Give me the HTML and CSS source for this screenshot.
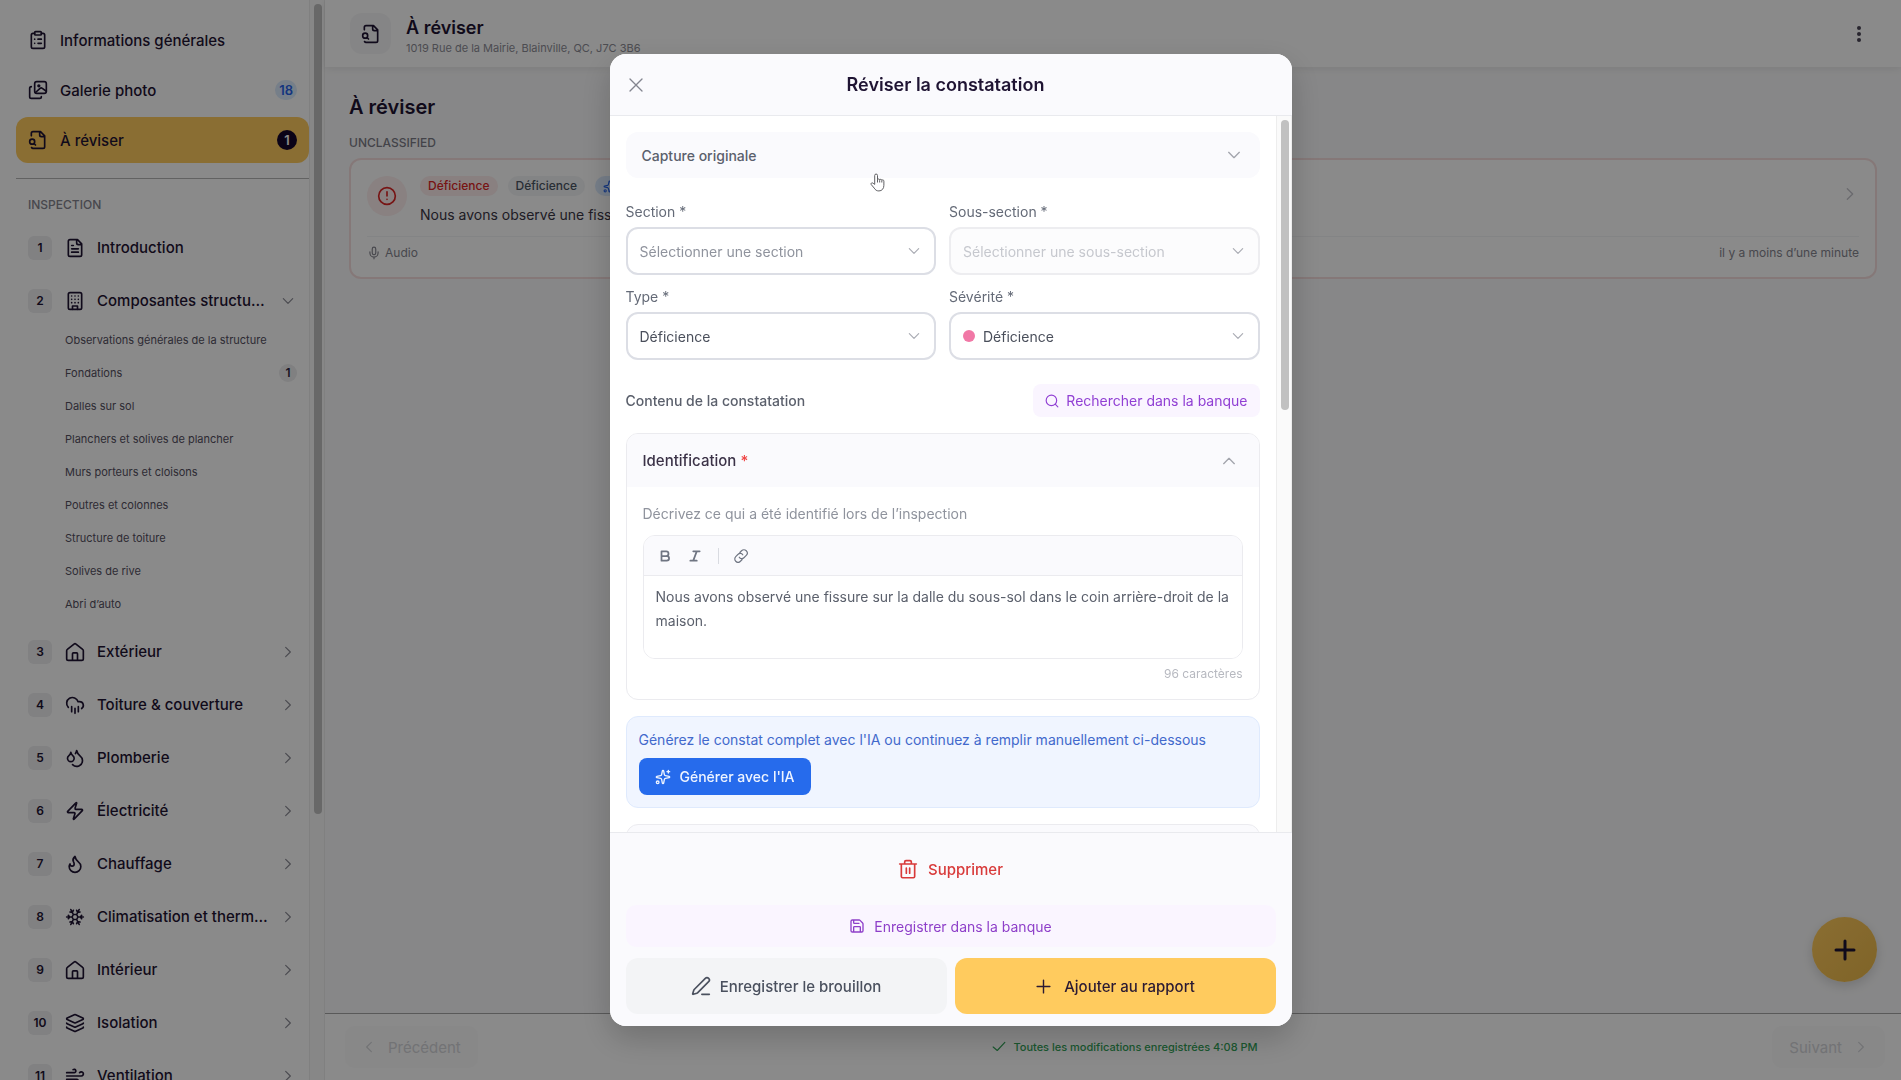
FILE: index.html
```html
<!DOCTYPE html>
<html lang="fr">
<head>
	<meta charset="utf-8">
	<meta name="viewport" content="width=device-width, initial-scale=1">
	<title>À réviser</title>
	<link rel="stylesheet" href="styles.css">
</head>
<body>
	<!-- icon sprite -->
	<svg class="sprite" aria-hidden="true">
		<symbol id="i-clipboard" viewBox="0 0 24 24"><rect width="8" height="4" x="8" y="2" rx="1"/><path d="M16 4h2a2 2 0 0 1 2 2v14a2 2 0 0 1-2 2H6a2 2 0 0 1-2-2V6a2 2 0 0 1 2-2h2M12 11h4M12 16h4M8 11h.01M8 16h.01"/></symbol>
		<symbol id="i-images" viewBox="0 0 24 24"><rect width="14" height="14" x="8" y="2" rx="2.5"/><path d="M4 8a2 2 0 0 0-2 2v10a2 2 0 0 0 2 2h10a2 2 0 0 0 2-2M9 15l5.500-5a2 2 0 0 1 2.700 0L22 13.500"/><circle cx="13" cy="7" r="1"/></symbol>
		<symbol id="i-review" viewBox="0 0 24 24"><path d="M14 2v4a2 2 0 0 0 2 2h4M4.268 21a2 2 0 0 0 1.727 1H18a2 2 0 0 0 2-2V7l-5-5H6a2 2 0 0 0-2 2v3M9 18l-1.500-1.500"/><circle cx="5" cy="14" r="3"/></symbol>
		<symbol id="i-file" viewBox="0 0 24 24"><path d="M15 2H6a2 2 0 0 0-2 2v16a2 2 0 0 0 2 2h12a2 2 0 0 0 2-2V7ZM14 2v4a2 2 0 0 0 2 2h4M10 9H8M16 13H8M16 17H8"/></symbol>
		<symbol id="i-building" viewBox="0 0 24 24"><rect width="16" height="20" x="4" y="2" rx="2"/><path d="M9 22v-4h6v4M8 6h.01M16 6h.01M12 6h.01M12 10h.01M12 14h.01M16 10h.01M16 14h.01M8 10h.01M8 14h.01"/></symbol>
		<symbol id="i-home" viewBox="0 0 24 24"><path d="M15 22v-8a1 1 0 0 0-1-1h-4a1 1 0 0 0-1 1v8M2 10.500a2 2 0 0 1 .8-1.600l8-6.400a2 2 0 0 1 2.400 0l8 6.400a2 2 0 0 1 .8 1.600V20a2 2 0 0 1-2 2H4a2 2 0 0 1-2-2z"/></symbol>
		<symbol id="i-rain" viewBox="0 0 24 24"><path d="M4 14.899A7 7 0 1 1 15.710 8h1.790a4.500 4.500 0 0 1 2.500 8.242M16 14v6M8 14v6M12 16v6"/></symbol>
		<symbol id="i-drops" viewBox="0 0 24 24"><path d="M7 16.300c2.200 0 4-1.830 4-4.050 0-1.160-.57-2.260-1.710-3.190S7.290 6.750 7 5.300c-.29 1.450-1.140 2.840-2.290 3.760S3 11.100 3 12.250c0 2.220 1.800 4.050 4 4.050zM12.560 6.600A10.970 10.970 0 0 0 14 3.020c.5 2.500 2 4.900 4 6.500s3 3.500 3 5.500a6.980 6.980 0 0 1-11.910 4.970"/></symbol>
		<symbol id="i-zap" viewBox="0 0 24 24"><path d="M4 14a1 1 0 0 1-.78-1.630l9.900-10.200a.5.5 0 0 1 .86.46l-1.920 6.020A1 1 0 0 0 13 10h7a1 1 0 0 1 .78 1.630l-9.900 10.200a.5.5 0 0 1-.86-.46l1.920-6.020A1 1 0 0 0 11 14z"/></symbol>
		<symbol id="i-flame" viewBox="0 0 24 24"><path d="M8.500 14.500A2.500 2.500 0 0 0 11 12c0-1.380-.5-2-1-3-1.072-2.143-.224-4.054 2-6 .5 2.500 2 4.900 4 6.500 2 1.600 3 3.500 3 5.500a7 7 0 1 1-14 0c0-1.153.433-2.294 1-3a2.500 2.500 0 0 0 2.500 2.500z"/></symbol>
		<symbol id="i-snow" viewBox="0 0 24 24"><path d="m10 20-1.250-2.500L6 18M10 4 8.750 6.500 6 6M14 20l1.250-2.500L18 18M14 4l1.250 2.500L18 6M17 21l-3-6h-4M17 3l-3 6 1.500 3M2 12h6.500L10 9M20 10l-1.500 2 1.500 2M22 12h-6.500L14 15M4 10l1.500 2L4 14M7 21l3-6-1.500-3M7 3l3 6h4"/></symbol>
		<symbol id="i-layers" viewBox="0 0 24 24"><path d="M12.830 2.180a2 2 0 0 0-1.660 0L2.600 6.080a1 1 0 0 0 0 1.830l8.580 3.910a2 2 0 0 0 1.660 0l8.580-3.900a1 1 0 0 0 0-1.830zM2 12a1 1 0 0 0 .58.91l8.600 3.910a2 2 0 0 0 1.650 0l8.580-3.900A1 1 0 0 0 22 12M2 17a1 1 0 0 0 .58.91l8.600 3.910a2 2 0 0 0 1.650 0l8.580-3.900A1 1 0 0 0 22 17"/></symbol>
		<symbol id="i-wind" viewBox="0 0 24 24"><path d="M12.800 19.600A2 2 0 1 0 14 16H2M17.500 8a2.500 2.500 0 1 1 2 4H2M9.800 4.400A2 2 0 1 1 11 8H2"/></symbol>
		<symbol id="i-down" viewBox="0 0 24 24"><path d="m4 8 8 8 8-8"/></symbol>
		<symbol id="i-up" viewBox="0 0 24 24"><path d="m4 16 8-8 8 8"/></symbol>
		<symbol id="i-right" viewBox="0 0 24 24"><path d="m8 4 8 8-8 8"/></symbol>
		<symbol id="i-left" viewBox="0 0 24 24"><path d="m16 4-8 8 8 8"/></symbol>
		<symbol id="i-close" viewBox="0 0 24 24"><path d="M3 3l18 18M21 3 3 21"/></symbol>
		<symbol id="i-plus" viewBox="0 0 24 24"><path d="M12 3v18M3 12h18"/></symbol>
		<symbol id="i-check" viewBox="0 0 24 24"><path d="M22 4 9 18l-7-6"/></symbol>
		<symbol id="i-alert" viewBox="0 0 24 24"><circle cx="12" cy="12" r="10"/><path d="M12 7v5M12 16h.01"/></symbol>
		<symbol id="i-mic" viewBox="0 0 24 24"><rect x="9" y="2" width="6" height="13" rx="3"/><path d="M12 19v3M19 10v2a7 7 0 0 1-14 0v-2"/></symbol>
		<symbol id="i-search" viewBox="0 0 24 24"><circle cx="11" cy="11" r="9"/><path d="m22 22-4.500-4.500"/></symbol>
		<symbol id="i-bold" viewBox="0 0 24 24"><path d="M6 12h9a4 4 0 0 1 0 8H6V4h8a4 4 0 0 1 0 8"/></symbol>
		<symbol id="i-italic" viewBox="0 0 24 24"><path d="M20 4H9M15 20H4M15 4 9 20"/></symbol>
		<symbol id="i-link" viewBox="0 0 24 24"><path d="M9 14a5 5 0 0 0 8 1l4-4a5 5 0 0 0-8-8l-3 3M15 10a5 5 0 0 0-8-1l-4 4a5 5 0 0 0 8 8l3-3"/></symbol>
		<symbol id="i-sparkles" viewBox="0 0 24 24"><path d="M11.017 2.814a1 1 0 0 1 1.966 0l1.051 5.558a2 2 0 0 0 1.594 1.594l5.558 1.051a1 1 0 0 1 0 1.966l-5.558 1.051a2 2 0 0 0-1.594 1.594l-1.051 5.558a1 1 0 0 1-1.966 0l-1.051-5.558a2 2 0 0 0-1.594-1.594l-5.558-1.051a1 1 0 0 1 0-1.966l5.558-1.051a2 2 0 0 0 1.594-1.594zM20 2v4M22 4h-4"/><circle cx="4" cy="20" r="2"/></symbol>
		<symbol id="i-save" viewBox="0 0 24 24"><path d="M15.200 3a2 2 0 0 1 1.400.6l3.800 3.800a2 2 0 0 1 .6 1.400V19a2 2 0 0 1-2 2H5a2 2 0 0 1-2-2V5a2 2 0 0 1 2-2zM17 21v-7a1 1 0 0 0-1-1H8a1 1 0 0 0-1 1v7M7 3v4a1 1 0 0 0 1 1h7"/></symbol>
		<symbol id="i-trash" viewBox="0 0 24 24"><path d="M2 6h20M4 6v15a1.500 1.500 0 0 0 1.500 1.500h13A1.500 1.500 0 0 0 20 21V6M8 6V3.500A1.500 1.500 0 0 1 9.500 2h5A1.500 1.500 0 0 1 16 3.500V6M10 11v6M14 11v6"/></symbol>
		<symbol id="i-pen" viewBox="0 0 24 24"><path d="M13 22h9M21.174 6.812a1 1 0 0 0-3.986-3.987L3.842 16.174a2 2 0 0 0-.5.83l-1.321 4.352a.5.5 0 0 0 .623.622l4.353-1.320a2 2 0 0 0 .83-.497z"/></symbol>
	</svg>

	<div class="app">
		<aside class="sidebar">
			<nav class="sidebar-nav">
				<a class="nav-link" href="#"><svg class="icon"><use href="#i-clipboard"/></svg><span class="nav-label">Informations générales</span></a>
				<a class="nav-link" href="#"><svg class="icon"><use href="#i-images"/></svg><span class="nav-label">Galerie photo</span><span class="count count-blue">18</span></a>
				<a class="nav-link active" href="#"><svg class="icon"><use href="#i-review"/></svg><span class="nav-label">À réviser</span><span class="count count-dark">1</span></a>
				<hr class="divider">
				<h2 class="nav-heading">INSPECTION</h2>
				<a class="section-link" href="#"><span class="num">1</span><svg class="icon"><use href="#i-file"/></svg><span class="nav-label">Introduction</span></a>
				<a class="section-link" href="#"><span class="num">2</span><svg class="icon"><use href="#i-building"/></svg><span class="nav-label">Composantes structu…</span><svg class="icon chevron"><use href="#i-down"/></svg></a>
				<div class="sub-list">
					<a class="sub-link" href="#">Observations générales de la structure</a>
					<a class="sub-link" href="#">Fondations<span class="count count-small">1</span></a>
					<a class="sub-link" href="#">Dalles sur sol</a>
					<a class="sub-link" href="#">Planchers et solives de plancher</a>
					<a class="sub-link" href="#">Murs porteurs et cloisons</a>
					<a class="sub-link" href="#">Poutres et colonnes</a>
					<a class="sub-link" href="#">Structure de toiture</a>
					<a class="sub-link" href="#">Solives de rive</a>
					<a class="sub-link" href="#">Abri d’auto</a>
				</div>
				<a class="section-link" href="#"><span class="num">3</span><svg class="icon"><use href="#i-home"/></svg><span class="nav-label">Extérieur</span><svg class="icon chevron"><use href="#i-right"/></svg></a>
				<a class="section-link" href="#"><span class="num">4</span><svg class="icon"><use href="#i-rain"/></svg><span class="nav-label">Toiture &amp; couverture</span><svg class="icon chevron"><use href="#i-right"/></svg></a>
				<a class="section-link" href="#"><span class="num">5</span><svg class="icon"><use href="#i-drops"/></svg><span class="nav-label">Plomberie</span><svg class="icon chevron"><use href="#i-right"/></svg></a>
				<a class="section-link" href="#"><span class="num">6</span><svg class="icon"><use href="#i-zap"/></svg><span class="nav-label">Électricité</span><svg class="icon chevron"><use href="#i-right"/></svg></a>
				<a class="section-link" href="#"><span class="num">7</span><svg class="icon"><use href="#i-flame"/></svg><span class="nav-label">Chauffage</span><svg class="icon chevron"><use href="#i-right"/></svg></a>
				<a class="section-link" href="#"><span class="num">8</span><svg class="icon"><use href="#i-snow"/></svg><span class="nav-label">Climatisation et therm…</span><svg class="icon chevron"><use href="#i-right"/></svg></a>
				<a class="section-link" href="#"><span class="num">9</span><svg class="icon"><use href="#i-home"/></svg><span class="nav-label">Intérieur</span><svg class="icon chevron"><use href="#i-right"/></svg></a>
				<a class="section-link" href="#"><span class="num">10</span><svg class="icon"><use href="#i-layers"/></svg><span class="nav-label">Isolation</span><svg class="icon chevron"><use href="#i-right"/></svg></a>
				<a class="section-link" href="#"><span class="num">11</span><svg class="icon"><use href="#i-wind"/></svg><span class="nav-label">Ventilation</span><svg class="icon chevron"><use href="#i-right"/></svg></a>
			</nav>
			<div class="scrollbar"><div class="thumb thumb-nav"></div></div>
		</aside>

		<main class="main">
			<header class="topbar">
				<div class="topbar-icon"><svg class="icon"><use href="#i-review"/></svg></div>
				<div class="topbar-text">
					<div class="topbar-title">À réviser</div>
					<div class="topbar-address">1019 Rue de la Mairie, Blainville, QC, J7C 3B6</div>
				</div>
				<button class="kebab" type="button" aria-label="Menu"><i></i><i></i><i></i></button>
			</header>

			<section class="content">
				<h1 class="page-title">À réviser</h1>
				<h2 class="group-title">UNCLASSIFIED</h2>
				<article class="card">
					<div class="card-top">
						<div class="card-alert"><svg class="icon"><use href="#i-alert"/></svg></div>
						<div class="card-info">
							<div class="chips">
								<span class="chip chip-red">Déficience</span>
								<span class="chip chip-gray">Déficience</span>
								<span class="chip chip-blue"><svg class="icon"><use href="#i-sparkles"/></svg></span>
							</div>
							<p class="card-text">Nous avons observé une fissure</p>
						</div>
						<svg class="icon card-arrow"><use href="#i-right"/></svg>
					</div>
					<div class="card-bottom">
						<span class="audio"><svg class="icon"><use href="#i-mic"/></svg>Audio</span>
						<span class="ago">il y a moins d’une minute</span>
					</div>
				</article>
			</section>

			<footer class="pager">
				<button class="pager-btn" type="button" disabled><svg class="icon"><use href="#i-left"/></svg>Précédent</button>
				<span class="saved"><svg class="icon"><use href="#i-check"/></svg>Toutes les modifications enregistrées 4:08 PM</span>
				<button class="pager-btn" type="button" disabled>Suivant<svg class="icon"><use href="#i-right"/></svg></button>
			</footer>
			<button class="fab" type="button" aria-label="Ajouter"><svg class="icon"><use href="#i-plus"/></svg></button>
		</main>
	</div>

	<div class="overlay">
		<div class="modal" role="dialog" aria-modal="true" aria-labelledby="modal-title">
			<header class="modal-head">
				<button class="close" type="button" aria-label="Fermer"><svg class="icon"><use href="#i-close"/></svg></button>
				<h2 class="modal-title" id="modal-title">Réviser la constatation</h2>
			</header>

			<div class="modal-scroll">
				<form class="modal-body" id="finding">
					<button class="capture" type="button">Capture originale<svg class="icon"><use href="#i-down"/></svg></button>

					<div class="fields">
						<div class="field">
							<label for="section">Section *</label>
							<div class="select">
								<select id="section" class="placeholder"><option>Sélectionner une section</option></select>
								<svg class="icon"><use href="#i-down"/></svg>
							</div>
						</div>
						<div class="field">
							<label for="subsection">Sous-section *</label>
							<div class="select disabled">
								<select id="subsection" class="placeholder" disabled><option>Sélectionner une sous-section</option></select>
								<svg class="icon"><use href="#i-down"/></svg>
							</div>
						</div>
						<div class="field">
							<label for="type">Type *</label>
							<div class="select">
								<select id="type"><option>Déficience</option></select>
								<svg class="icon"><use href="#i-down"/></svg>
							</div>
						</div>
						<div class="field">
							<label for="severity">Sévérité *</label>
							<div class="select with-dot">
								<span class="dot"></span>
								<select id="severity"><option>Déficience</option></select>
								<svg class="icon"><use href="#i-down"/></svg>
							</div>
						</div>
					</div>

					<div class="content-row">
						<h3 class="content-title">Contenu de la constatation</h3>
						<button class="bank-search" type="button"><svg class="icon"><use href="#i-search"/></svg>Rechercher dans la banque</button>
					</div>

					<section class="panel">
						<button class="panel-head" type="button"><span>Identification <b class="req">*</b></span><svg class="icon"><use href="#i-up"/></svg></button>
						<div class="panel-body">
							<label class="hint" for="identification">Décrivez ce qui a été identifié lors de l’inspection</label>
							<div class="editor">
								<div class="toolbar">
									<button type="button" aria-label="Gras"><svg class="icon"><use href="#i-bold"/></svg></button>
									<button type="button" aria-label="Italique"><svg class="icon"><use href="#i-italic"/></svg></button>
									<span class="sep"></span>
									<button type="button" aria-label="Lien"><svg class="icon icon-link"><use href="#i-link"/></svg></button>
								</div>
								<textarea id="identification">Nous avons observé une fissure sur la dalle du sous-sol dans le coin arrière-droit de la maison.</textarea>
							</div>
							<div class="chars">96 caractères</div>
						</div>
					</section>

					<section class="ai-box">
						<p>Générez le constat complet avec l'IA ou continuez à remplir manuellement ci-dessous</p>
						<button class="ai-btn" type="button"><svg class="icon"><use href="#i-sparkles"/></svg>Générer avec l'IA</button>
					</section>

					<section class="panel panel-next"></section>
				</form>
				<div class="scrollbar"><div class="thumb thumb-modal"></div></div>
			</div>

			<footer class="modal-foot">
				<button class="delete" type="button"><svg class="icon"><use href="#i-trash"/></svg>Supprimer</button>
				<button class="bank-save" type="button"><svg class="icon"><use href="#i-save"/></svg>Enregistrer dans la banque</button>
				<div class="foot-row">
					<button class="btn btn-draft" type="button"><svg class="icon"><use href="#i-pen"/></svg>Enregistrer le brouillon</button>
					<button class="btn btn-add" type="submit" form="finding"><svg class="icon icon-plus"><use href="#i-plus"/></svg>Ajouter au rapport</button>
				</div>
			</footer>

			<svg class="pointer" viewBox="0 0 16 20"><path d="M5 12V2.500a1.500 1.500 0 0 1 3 0V7a1.200 1.200 0 0 1 2.300.3 1.200 1.200 0 0 1 2.300.5 1.200 1.200 0 0 1 2.200.8V13c0 3.500-2 6-5.300 6-2.500 0-3.700-1-5-3L1.300 12.200C.5 10.700 2.200 9.700 3.300 10.800z"/><path d="M8 7v3M10.300 7.500V10M12.600 8v2"/></svg>
		</div>
	</div>
</body>
</html>
```

FILE: styles.css
```css
* {
	box-sizing: border-box;
}

body {
	margin: 0;
	font-family: "Inter", "Open Sans", sans-serif;
	font-size: 14px;
	color: #1f1433;
	background: #fafafb;
	overflow: hidden;
}

button, select, textarea {
	font: inherit;
	color: inherit;
	margin: 0;
}

button {
	display: flex;
	align-items: center;
	border: 0;
	background: none;
	padding: 0;
	cursor: pointer;
}

a {
	color: inherit;
	text-decoration: none;
}

h1, h2, h3, p {
	margin: 0;
}

.sprite {
	display: none;
}

.icon {
	width: 20px;
	height: 20px;
	flex: none;
	fill: none;
	stroke: currentColor;
	stroke-width: 2;
	stroke-linecap: round;
	stroke-linejoin: round;
}

.app {
	display: flex;
	height: 100vh;
}

/* sidebar */
.sidebar {
	display: flex;
	width: 325px;
	flex: none;
	background: #fff;
	overflow: hidden;
}

.sidebar-nav {
	flex: 1;
	padding: 17px 0 0 16px;
}

.scrollbar {
	width: 16px;
	flex: none;
	padding: 4px;
	background: #fafafa;
	border-left: 1px solid #ededed;
	border-right: 1px solid #ededed;
}

.thumb {
	width: 8px;
	border-radius: 4px;
	background: #c1c1c1;
}

.thumb-nav {
	height: 75vh;
}

.thumb-modal {
	height: 41%;
}

.nav-link {
	display: flex;
	align-items: center;
	gap: 12px;
	height: 46px;
	margin-bottom: 4px;
	padding: 0 12px;
	border-radius: 12px;
	font-size: 15px;
	font-weight: 500;
}

.nav-link.active {
	background: #ffcb5e;
}

.nav-label {
	flex: 1;
	white-space: nowrap;
}

.count {
	height: 20px;
	min-width: 20px;
	border-radius: 10px;
	font-size: 13px;
	font-weight: 600;
	line-height: 20px;
	text-align: center;
}

.count-blue {
	padding: 0 4px;
	background: #dbeafe;
	color: #2563eb;
}

.count-dark {
	background: #16062b;
	color: #fff;
}

.count-small {
	height: 18px;
	min-width: 18px;
	font-size: 12px;
	line-height: 18px;
	background: #ececee;
	color: #2f2640;
}

.divider {
	margin: 15px 0 0;
	border: 0;
	border-top: 1px solid #b5b5b5;
}

.nav-heading {
	margin: 18px 0 8px;
	padding-left: 12px;
	font-size: 12px;
	line-height: 16px;
	font-weight: 500;
	color: #85858f;
}

.section-link {
	display: flex;
	align-items: center;
	height: 53px;
	padding: 0 14px 0 12px;
	font-size: 15px;
	font-weight: 500;
}

.section-link .num {
	width: 24px;
	height: 24px;
	margin-right: 13px;
	border-radius: 6px;
	background: #eeeef0;
	font-size: 12px;
	font-weight: 600;
	line-height: 24px;
	text-align: center;
}

.section-link .nav-label {
	padding-left: 12px;
}

.chevron {
	width: 14px;
	height: 14px;
	color: #8a8a94;
}

.sub-list {
	margin-top: -4px;
	padding: 0 12px 5px 49px;
}

.sub-link {
	display: flex;
	align-items: center;
	justify-content: space-between;
	height: 33px;
	font-size: 11px;
	color: #55505f;
}

/* main column */
.main {
	display: flex;
	flex-direction: column;
	flex: 1;
	min-width: 0;
}

.topbar {
	display: flex;
	align-items: center;
	gap: 15px;
	height: 67px;
	padding: 0 32px 0 25px;
	background: #fff;
	box-shadow: 0 2px 8px rgba(0, 0, 0, 0.08);
}

.topbar-icon {
	display: flex;
	align-items: center;
	justify-content: center;
	width: 41px;
	height: 41px;
	border-radius: 12px;
	background: #f6f6f7;
}

.topbar-text {
	flex: 1;
	padding-top: 3px;
}

.topbar-title {
	font-size: 18px;
	font-weight: 600;
	line-height: 25px;
}

.topbar-address {
	font-size: 11px;
	line-height: 16px;
	color: #8d8d96;
}

.kebab {
	flex-direction: column;
	gap: 2px;
	padding: 4px 8px;
}

.kebab i {
	width: 4px;
	height: 4px;
	border-radius: 50%;
	background: #4a4556;
}

.content {
	flex: 1;
	padding: 25px 24px;
}

.page-title {
	font-size: 20px;
	font-weight: 600;
	line-height: 30px;
}

.group-title {
	margin: 13px 0 7px;
	font-size: 12px;
	font-weight: 500;
	line-height: 16px;
	color: #7d7d88;
}

.card {
	padding: 16px;
	border: 2px solid #f6dede;
	border-radius: 12px;
	background: #fff;
}

.card-top {
	display: flex;
	gap: 13px;
	padding-bottom: 10px;
	border-bottom: 1px solid #f3f4f6;
}

.card-alert {
	display: flex;
	align-items: center;
	justify-content: center;
	width: 40px;
	height: 40px;
	border-radius: 50%;
	background: #fdeeee;
	color: #dc2626;
}

.card-info {
	flex: 1;
}

.chips {
	display: flex;
	gap: 10px;
}

.chip {
	height: 20px;
	padding: 0 8px;
	border-radius: 10px;
	font-size: 12px;
	font-weight: 500;
	line-height: 20px;
}

.chip-red {
	background: #fdecec;
	color: #dc2626;
}

.chip-gray {
	background: #f3f4f6;
	color: #4b5563;
}

.chip-blue {
	display: flex;
	align-items: center;
	background: #dbeafe;
	color: #2563eb;
}

.chip-blue .icon {
	width: 13px;
	height: 13px;
}

.card-text {
	margin-top: 8px;
	font-size: 14px;
	line-height: 22px;
	color: #3a3645;
}

.card-arrow {
	width: 16px;
	height: 16px;
	margin: 10px 1px 0 0;
	color: #c4c4cc;
}

.card-bottom {
	display: flex;
	justify-content: space-between;
	padding-top: 8px;
	font-size: 12px;
	line-height: 16px;
	color: #85858f;
}

.audio {
	display: flex;
	align-items: center;
	gap: 4px;
}

.audio .icon {
	width: 14px;
	height: 14px;
}

.pager {
	display: flex;
	align-items: center;
	justify-content: space-between;
	height: 67px;
	padding: 0 16px 0 20px;
	border-top: 1px solid #a5a5a5;
	background: #fff;
}

.pager-btn {
	gap: 12px;
	height: 42px;
	padding: 0 17px;
	border-radius: 10px;
	background: #fbfbfc;
	font-size: 15px;
	color: #d3d4d8;
}

.pager-btn .icon {
	width: 14px;
	height: 14px;
}

.saved {
	display: flex;
	align-items: center;
	gap: 7px;
	font-size: 11px;
	font-weight: 500;
	color: #32a257;
}

.saved .icon {
	width: 14px;
	height: 14px;
}

.fab {
	position: fixed;
	right: 24px;
	bottom: 98px;
	justify-content: center;
	width: 65px;
	height: 65px;
	border-radius: 50%;
	background: linear-gradient(135deg, #ffcb5e, #ebb84a);
	box-shadow: 0 4px 12px rgba(0, 0, 0, 0.15);
}

.fab .icon {
	width: 24px;
	height: 24px;
	stroke-width: 3;
}

/* modal */
.overlay {
	position: fixed;
	inset: 0;
	display: flex;
	align-items: center;
	justify-content: center;
	background: rgba(0, 0, 0, 0.46);
}

.modal {
	position: relative;
	display: flex;
	flex-direction: column;
	width: 100%;
	max-width: 682px;
	height: 90vh;
	border-radius: 16px;
	background: #fff;
	box-shadow: 0 12px 32px rgba(0, 0, 0, 0.2);
	overflow: hidden;
}

.modal-head {
	display: flex;
	align-items: center;
	height: 62px;
	padding: 0 44px 0 18px;
	border-bottom: 1px solid #e9eaee;
	background: #fafafd;
}

.close {
	color: #83858f;
}

.close .icon {
	width: 16px;
	height: 16px;
}

.modal-title {
	flex: 1;
	font-size: 18px;
	font-weight: 600;
	text-align: center;
}

.modal-scroll {
	display: flex;
	flex: 1;
	min-height: 0;
}

.modal-body {
	display: flex;
	flex-direction: column;
	flex: 1;
	min-width: 0;
	padding: 16px 16px 0;
	overflow: hidden;
}

.modal-body > * {
	flex: none;
}

.capture {
	justify-content: space-between;
	height: 46px;
	padding: 0 18px 0 16px;
	border-radius: 12px;
	background: #fafafd;
	font-weight: 500;
	color: #5b606c;
}

.capture .icon,
.panel-head .icon {
	width: 16px;
	height: 16px;
	color: #a3a5ad;
}

.fields {
	display: grid;
	grid-template-columns: 1fr 1fr;
	gap: 12px 13px;
	margin-top: 24px;
}

.field label {
	display: block;
	margin-bottom: 5px;
	line-height: 20px;
	color: #646a77;
}

.select {
	position: relative;
	display: flex;
	align-items: center;
}

.select select {
	flex: 1;
	width: 100%;
	height: 48px;
	padding: 0 36px 0 12px;
	border: 2px solid #dcdee5;
	border-radius: 12px;
	background: #fff;
	color: #4a4f5b;
	appearance: none;
}

.select select.placeholder {
	color: #8f939d;
}

.select .icon {
	position: absolute;
	right: 15px;
	width: 14px;
	height: 14px;
	color: #a9abb3;
	pointer-events: none;
}

.select.disabled select {
	border-color: #ededf0;
	background: #fcfcfd;
	color: #c6c8ce;
	opacity: 1;
}

.with-dot select {
	padding-left: 32px;
}

.dot {
	position: absolute;
	left: 14px;
	width: 12px;
	height: 12px;
	border-radius: 50%;
	background: #f178a6;
}

.content-row {
	display: flex;
	align-items: center;
	justify-content: space-between;
	margin-top: 24px;
}

.content-title {
	font-size: 14px;
	font-weight: 500;
	color: #5b606c;
}

.bank-search {
	gap: 7px;
	height: 33px;
	padding: 0 12px;
	border-radius: 8px;
	background: #faf5ff;
	color: #9140d4;
}

.bank-search .icon {
	width: 14px;
	height: 14px;
}

.panel {
	margin-top: 16px;
	border: 1px solid #ebebef;
	border-radius: 12px;
	overflow: hidden;
}

.panel-head {
	justify-content: space-between;
	width: 100%;
	height: 53px;
	padding: 0 22px 0 16px;
	background: #fafafd;
	font-size: 15px;
	font-weight: 500;
	color: #3b3247;
}

.req {
	font-weight: 500;
	color: #ef4444;
}

.panel-body {
	padding: 17px 16px;
}

.hint {
	display: block;
	line-height: 20px;
	color: #8f939d;
}

.editor {
	margin-top: 11px;
	border: 1px solid #ebebef;
	border-radius: 12px;
	overflow: hidden;
}

.toolbar {
	display: flex;
	align-items: center;
	height: 40px;
	padding-left: 14px;
	border-bottom: 1px solid #ebebef;
	background: #fafafd;
	color: #6f7582;
}

.toolbar button {
	margin-right: 16px;
}

.toolbar .icon {
	width: 14px;
	height: 14px;
	stroke-width: 3;
}

.toolbar .icon-link {
	stroke-width: 2;
}

.sep {
	width: 1px;
	height: 16px;
	margin-right: 15px;
	background: #d9dbe1;
}

.editor textarea {
	display: block;
	width: 100%;
	height: 82px;
	padding: 9px 12px;
	border: 0;
	line-height: 24px;
	color: #5b606c;
	resize: none;
	outline: 0;
}

.chars {
	margin-top: 7px;
	font-size: 12px;
	line-height: 16px;
	text-align: right;
	color: #b7b9c0;
}

.ai-box {
	margin-top: 16px;
	padding: 13px 12px 12px;
	border: 1px solid #dfeafd;
	border-radius: 12px;
	background: #f0f5ff;
	color: #4269cc;
}

.ai-box p {
	line-height: 20px;
}

.ai-btn {
	gap: 9px;
	height: 37px;
	margin-top: 8px;
	padding: 0 16px;
	border-radius: 8px;
	background: #266bec;
	font-weight: 500;
	color: #eef4ff;
}

.ai-btn .icon {
	width: 16px;
	height: 16px;
}

.panel-next {
	height: 80px;
	background: #fafafd;
}

.modal-foot {
	display: flex;
	flex-direction: column;
	padding: 9px 16px 12px;
	border-top: 1px solid #e9eaee;
	background: #fafafd;
}

.delete {
	justify-content: center;
	gap: 10px;
	height: 54px;
	font-size: 15px;
	font-weight: 500;
	color: #d83a3a;
}

.bank-save {
	justify-content: center;
	gap: 9px;
	height: 42px;
	margin: 9px 0 11px;
	border-radius: 10px;
	background: #faf5ff;
	color: #8e3fc9;
}

.bank-save .icon {
	width: 16px;
	height: 16px;
}

.foot-row {
	display: grid;
	grid-template-columns: 1fr 1fr;
	gap: 8px;
}

.btn {
	justify-content: center;
	gap: 9px;
	height: 56px;
	border-radius: 12px;
	font-size: 15px;
	font-weight: 500;
}

.btn-draft {
	background: #f3f4f6;
	color: #4a505e;
}

.btn-add {
	gap: 12px;
	background: #ffcb5e;
	color: #2b1a33;
}

.btn .icon-plus {
	width: 17px;
	height: 17px;
}

/* hand pointer hovering the dialog */
.pointer {
	position: absolute;
	left: 260px;
	top: 119px;
	width: 15px;
	height: 19px;
	fill: #fff;
	stroke: #55555a;
	stroke-width: 1;
	stroke-linejoin: round;
}
```
